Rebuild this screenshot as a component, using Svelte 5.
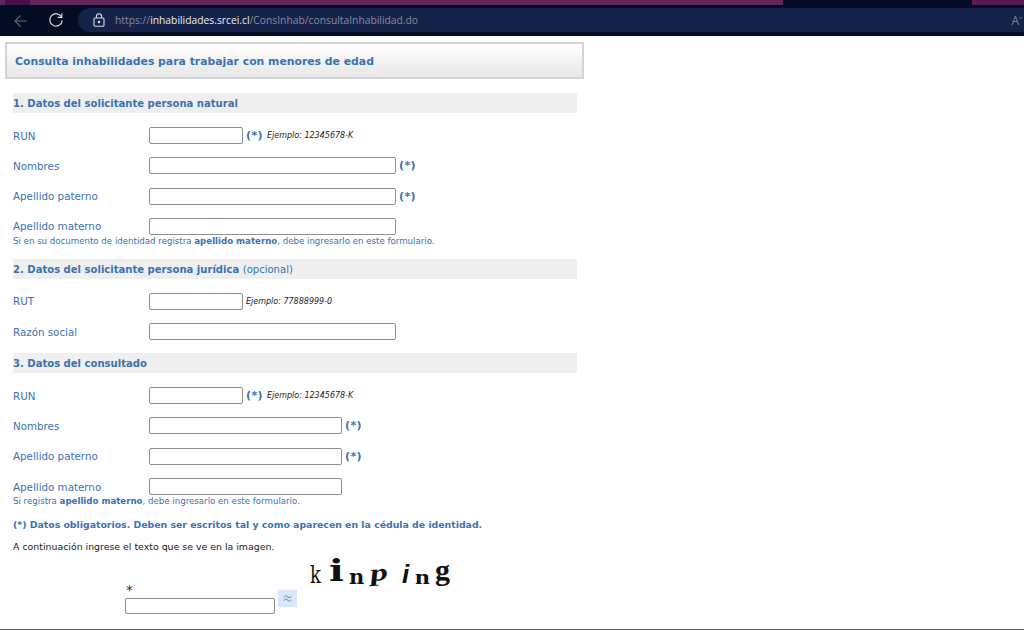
<script>
	const obligatorio = '(*)';
	const captcha = [
		{ c: 'k', cls: 'l1' },
		{ c: 'i', cls: 'l2' },
		{ c: 'n', cls: 'l3' },
		{ c: 'p', cls: 'l4' },
		{ c: 'i', cls: 'l5' },
		{ c: 'n', cls: 'l6' },
		{ c: 'g', cls: 'l7' }
	];
</script>

<div class="browser">
	<div class="tabs">
		<div class="tab-icon"></div>
		<div class="tab-fill"></div>
		<div class="tab-active"></div>
		<div class="tab-end"></div>
	</div>
	<div class="toolbar">
		<div class="nav">
			<svg class="back" width="16" height="14" viewBox="0 0 16 14" fill="none" stroke="#5d6475" stroke-width="1.2">
				<path d="M14 7H2M7.500 1.500 2 7l5.500 5.500" />
			</svg>
			<svg class="reload" width="16" height="16" viewBox="0 0 16 16" fill="none" stroke="#d4d6dc" stroke-width="1.2">
				<path d="M13.600 5.200A6.200 6.200 0 1 0 14.200 8.400" />
				<path d="M13.800 1.400v4h-4" />
			</svg>
		</div>
		<div class="address">
			<svg class="lock" width="12" height="14" viewBox="0 0 12 14" fill="none" stroke="#d8dae0" stroke-width="1.1">
				<rect x="1" y="5" width="10" height="8.200" rx="1" />
				<path d="M3.400 5V3.300a2.600 2.600 0 0 1 5.200 0V5" />
				<circle cx="6" cy="9" r="0.7" fill="#d8dae0" />
			</svg>
			<span class="url"><span class="dim">https://</span><span class="host">inhabilidades.srcei.cl</span><span class="dim">/ConsInhab/consultaInhabilidad.do</span></span>
			<span class="read">A<small>”</small></span>
		</div>
	</div>
	<div class="rule"></div>
</div>

<main>
	<h1>Consulta inhabilidades para trabajar con menores de edad</h1>

	<form>
		<h2>1. Datos del solicitante persona natural</h2>
		<div class="row first">
			<label for="run1">RUN</label>
			<input id="run1" class="short" />
			<span class="req">{obligatorio}</span>
			<em>Ejemplo: 12345678-K</em>
		</div>
		<div class="row">
			<label for="nom1">Nombres</label>
			<input id="nom1" class="long" />
			<span class="req">{obligatorio}</span>
		</div>
		<div class="row">
			<label for="pat1">Apellido paterno</label>
			<input id="pat1" class="long" />
			<span class="req">{obligatorio}</span>
		</div>
		<div class="row">
			<label for="mat1">Apellido materno</label>
			<input id="mat1" class="long" />
		</div>
		<p class="note">Si en su documento de identidad registra <b>apellido materno</b>, debe ingresarlo en este formulario.</p>

		<h2 class="sec2">2. Datos del solicitante persona jurídica <span>(opcional)</span></h2>
		<div class="row first">
			<label for="rut">RUT</label>
			<input id="rut" class="short" />
			<em class="alone">Ejemplo: 77888999-0</em>
		</div>
		<div class="row">
			<label for="razon">Razón social</label>
			<input id="razon" class="long" />
		</div>

		<h2 class="sec3">3. Datos del consultado</h2>
		<div class="row first">
			<label for="run2">RUN</label>
			<input id="run2" class="short" />
			<span class="req">{obligatorio}</span>
			<em>Ejemplo: 12345678-K</em>
		</div>
		<div class="row">
			<label for="nom2">Nombres</label>
			<input id="nom2" class="mid" />
			<span class="req">{obligatorio}</span>
		</div>
		<div class="row">
			<label for="pat2">Apellido paterno</label>
			<input id="pat2" class="mid" />
			<span class="req">{obligatorio}</span>
		</div>
		<div class="row">
			<label for="mat2">Apellido materno</label>
			<input id="mat2" class="mid" />
		</div>
		<p class="note">Si registra <b>apellido materno</b>, debe ingresarlo en este formulario.</p>

		<p class="oblig">(*) Datos obligatorios. Deben ser escritos tal y como aparecen en la cédula de identidad.</p>
		<p class="intro">A continuación ingrese el texto que se ve en la imagen.</p>

		<div class="verify">
			<div class="answer">
				<span class="star">*</span>
				<input class="cap-input" aria-label="Texto de la imagen" />
			</div>
			<button type="button" class="refresh" aria-label="Cambiar imagen">
				<svg width="9" height="9" viewBox="0 0 12 12" fill="none" stroke="#8b9db8" stroke-width="1.6">
					<path d="M1 4.500C3 1.500 5 2 6 3.500S9 6 11 3M1 9c2-3 4-2.500 5-1s3 2.500 5-.5" />
				</svg>
			</button>
			<div class="captcha">
				{#each captcha as l}
					<span class={l.cls}>{l.c}</span>
				{/each}
			</div>
		</div>
	</form>
</main>
<div class="bottom"></div>

<style>
	:global(body) {
		margin: 0;
		background: #fff;
		font-family: "DejaVu Sans", Verdana, sans-serif;
		overflow: hidden;
	}
	.browser {
		height: 36px;
		background: #040c24;
		display: flex;
		flex-direction: column;
	}
	.tabs {
		height: 5px;
		display: flex;
	}
	.tab-icon {
		width: 25px;
		margin-left: 5px;
		background: #45104a;
		box-shadow: -5px 0 0 #5f2458;
	}
	.tab-fill {
		width: 753px;
		background: #63265a;
	}
	.tab-active {
		width: 189px;
	}
	.tab-end {
		flex: 1;
		background: #5a1a58;
	}
	.toolbar {
		margin-top: 3px;
		height: 24px;
		display: flex;
		align-items: center;
	}
	.nav {
		width: 78px;
		height: 100%;
		position: relative;
	}
	.back {
		position: absolute;
		left: 13px;
		top: 6px;
	}
	.reload {
		position: absolute;
		left: 48px;
		top: 4px;
	}
	.address {
		flex: 1;
		height: 100%;
		background: #15234a;
		border-radius: 12px 0 0 12px;
		display: flex;
		align-items: center;
		padding-left: 15px;
		color: #8d93a5;
		font-family: "Open Sans", "Noto Sans", sans-serif;
		font-size: 10.3px;
	}
	.url {
		margin-left: 10px;
	}
	.dim {
		color: #858c9f;
	}
	.host {
		color: #eceef3;
	}
	.read {
		margin-left: auto;
		margin-right: 2px;
		font-size: 12px;
		color: #7d8496;
	}
	.read small {
		font-size: 8px;
		vertical-align: 3px;
	}
	.rule {
		height: 4px;
		background: #040c24;
	}
	main {
		width: 579px;
		margin: 6px 0 0 5px;
		color: #3a72b4;
		font-size: 10.3px;
	}
	h1 {
		margin: 0;
		height: 33px;
		padding-left: 8px;
		line-height: 35px;
		border: 2px solid #d4d4d4;
		background: linear-gradient(#fff, #e7e7e7);
		font-size: 10.85px;
		font-weight: 700;
		color: #3a72b4;
	}
	form {
		padding: 14px 7px 0 8px;
	}
	h2 {
		margin: 0;
		height: 20px;
		line-height: 21px;
		background: #efefef;
		font-size: 10.05px;
		font-weight: 700;
		color: #3a72b4;
	}
	h2 span {
		font-weight: 400;
	}
	.sec2 {
		margin-top: 13px;
	}
	.sec3 {
		margin-top: 13px;
	}
	.row {
		height: 17px;
		margin-top: 13.3px;
		display: flex;
		align-items: center;
	}
	.row.first {
		margin-top: 14px;
	}
	label {
		width: 136px;
		flex: none;
		font-size: 10.3px;
	}
	input {
		box-sizing: border-box;
		height: 17px;
		padding: 0;
		background: #fff;
		border: 1px solid #8f8f8f;
		border-radius: 2px;
	}
	.short {
		width: 94px;
	}
	.long {
		width: 247px;
	}
	.mid {
		width: 193px;
	}
	.req {
		margin-left: 3px;
		font-size: 11px;
		font-weight: 700;
		letter-spacing: 0.4px;
	}
	em {
		margin-left: 4px;
		font-size: 8px;
		color: #222;
	}
	em.alone {
		margin-left: 3px;
	}
	.note {
		margin: 1px 0 0;
		font-size: 8.63px;
		line-height: 10px;
	}
	.oblig {
		margin: 12px 0 0;
		font-size: 9.35px;
		font-weight: 700;
		line-height: 13px;
	}
	.intro {
		margin: 9px 0 0;
		font-size: 9.4px;
		line-height: 13px;
		color: #1c1c1c;
	}
	.verify {
		display: flex;
		align-items: flex-end;
		margin: 0 0 0 112px;
		height: 61px;
	}
	.answer {
		display: flex;
		flex-direction: column;
		width: 150px;
	}
	.star {
		height: 15px;
		font-size: 14px;
		line-height: 14px;
		color: #1a3d1a;
		padding-left: 1px;
	}
	.cap-input {
		width: 150px;
		height: 16px;
	}
	.refresh {
		width: 19px;
		height: 17px;
		margin: 0 0 7px 3px;
		padding: 0;
		border: 0;
		background: #d9e8fc;
		display: flex;
		align-items: center;
		justify-content: center;
	}
	.captcha {
		align-self: flex-start;
		margin: 5px 0 0 13px;
		display: flex;
		align-items: baseline;
		height: 34px;
		color: #111;
		font-weight: 700;
		font-family: "Liberation Serif", serif;
	}
	.captcha span {
		display: block;
		line-height: 30px;
		transform-origin: left bottom;
	}
	.l1 {
		font-size: 25px;
		font-family: "DejaVu Serif", serif;
		font-weight: 400;
		width: 19px;
		transform: scaleX(0.72);
	}
	.l2 {
		font-size: 30px;
		font-family: "DejaVu Serif", serif;
		width: 20px;
		transform: scaleX(1.3) translateY(-2px);
	}
	.l3 {
		font-size: 21px;
		font-family: "DejaVu Serif", serif;
		width: 23px;
		transform: translateY(1px);
	}
	.l4 {
		font-size: 24px;
		font-style: italic;
		width: 30px;
		transform: scaleX(1.5) translateY(-2px) rotate(-6deg);
	}
	.l5 {
		font-size: 26px;
		font-family: "Liberation Sans", sans-serif;
		font-style: italic;
		width: 13px;
	}
	.l6 {
		font-size: 22px;
		width: 20px;
		transform: scaleX(1.2) translateY(1px);
	}
	.l7 {
		font-size: 30px;
		width: 20px;
		transform: translateY(-3px);
	}
	.bottom {
		position: fixed;
		left: 0;
		right: 0;
		bottom: 0;
		height: 1px;
		background: #5a6268;
	}
</style>
